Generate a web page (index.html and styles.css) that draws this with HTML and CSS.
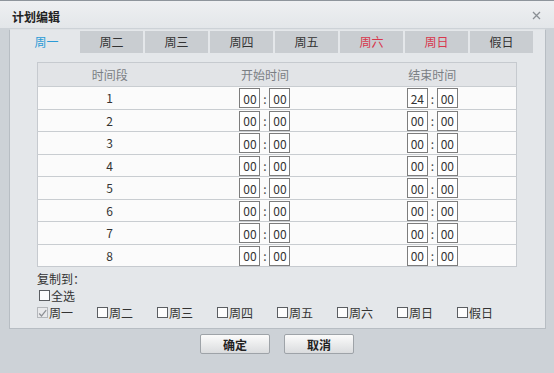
FILE: index.html
```html
<!DOCTYPE html>
<html lang="zh-CN">
<head>
  <meta charset="UTF-8" />
  <title>计划编辑</title>
<link rel="stylesheet" href="styles.css">
</head>
<body>

  <div class="dialog">
    <!-- 标题栏 -->
    <div class="titlebar">
      <span class="title">计划编辑</span>
      <svg class="close" width="9" height="9" viewBox="0 0 9 9">
        <path d="M1 1 L8 8 M8 1 L1 8" stroke="#8a8f94" stroke-width="1.3" fill="none" />
      </svg>
    </div>

    <div class="panel">
      <!-- 星期标签 -->
      <div class="tabs">
        <div class="tab active">周一</div>
        <div class="tab">周二</div>
        <div class="tab">周三</div>
        <div class="tab">周四</div>
        <div class="tab">周五</div>
        <div class="tab weekend">周六</div>
        <div class="tab weekend">周日</div>
        <div class="tab">假日</div>
      </div>

      <!-- 时间段表格 -->
      <table class="schedule">
        <thead>
          <tr><th class="col-seg">时间段</th><th class="col-time">开始时间</th><th class="col-time">结束时间</th></tr>
        </thead>
        <tbody id="rows"></tbody>
      </table>

      <!-- 复制到 -->
      <div class="copy">
        <div class="copy-label">复制到：</div>
        <div class="copy-line"><span class="box"></span>全选</div>
        <div class="days">
          <span class="day"><span class="box checked"><svg width="11" height="11" viewBox="0 0 11 11"><path d="M1.5 5.5 L4.3 8.5 L10 1.5" stroke="#8d9095" stroke-width="1.5" fill="none"/></svg></span>周一</span>
          <span class="day"><span class="box"></span>周二</span>
          <span class="day"><span class="box"></span>周三</span>
          <span class="day"><span class="box"></span>周四</span>
          <span class="day"><span class="box"></span>周五</span>
          <span class="day"><span class="box"></span>周六</span>
          <span class="day"><span class="box"></span>周日</span>
          <span class="day"><span class="box"></span>假日</span>
        </div>
      </div>
    </div>

    <div class="actions">
      <button>确定</button>
      <button>取消</button>
    </div>
  </div>

  <script>
    // 生成8个时间段
    const tbody = document.getElementById('rows');
    for (let i = 1; i <= 8; i++) {
      const end = i === 1 ? '24' : '00';
      const tr = document.createElement('tr');
      tr.innerHTML =
        `<td>${i}</td>` +
        `<td><span class="time"><input value="00"><i>:</i><input value="00"></span></td>` +
        `<td><span class="time"><input value="${end}"><i>:</i><input value="00"></span></td>`;
      tbody.appendChild(tr);
    }
  </script>

</body>
</html>
```

FILE: styles.css
```css
body {
  margin: 0;
  background-color: #cdd2d7;
  font-family: "Noto Sans CJK SC", sans-serif;
  font-size: 12px;
  color: #333;
}

.dialog {
  width: 554px;
  height: 373px;
  border-top: 1px solid #8e959c;
  box-sizing: border-box;
}

/* 标题栏 */
.titlebar {
  height: 27px;
  display: flex;
  align-items: center;
  justify-content: space-between;
  padding: 3px 13px 0 12px;
  box-sizing: border-box;
  background: linear-gradient(#eef0f2, #e3e6e9);
}

.title {
  font-weight: bold;
  color: #222;
  font-size: 12px;
}

.close {
  margin-top: -2px;
}

/* 面板 */
.panel {
  margin: 1px 8px 0 9px;
  height: 300px;
  box-sizing: border-box;
  border: 1px solid #b7bdc3;
  border-top-color: #dfe2e5;
  background-color: #e4e7ea;
}

.tabs {
  display: flex;
  gap: 2px;
  padding-left: 5px;
  margin-top: 1px;
}

.tab {
  width: 63px;
  height: 22px;
  line-height: 22px;
  text-align: center;
  background-color: #c9cdd1;
  color: #333;
}

.tab.active {
  background-color: #e4e7ea;
  color: #2b9bd6;
}

.tab.weekend {
  color: #d8364c;
}

/* 表格 */
.schedule {
  margin: 9px 0 0 27px;
  width: 480px;
  border-collapse: collapse;
  border: 1px solid #c6cacf;
}

.schedule th {
  height: 23px;
  font-weight: normal;
  color: #7b7f84;
  background-color: #e2e4e7;
  padding: 0;
}

.col-seg {
  width: 144px;
}

.col-time {
  width: 168px;
}

.schedule td {
  height: 21.5px;
  padding: 0;
  text-align: center;
  background-color: #fbfbfb;
  border-top: 1px solid #c9cdd1;
}

.time {
  display: inline-flex;
  align-items: center;
  vertical-align: middle;
}

.time input {
  width: 21px;
  height: 20px;
  box-sizing: border-box;
  border: 1px solid #7d7d7d;
  padding: 0;
  text-align: center;
  font-family: inherit;
  font-size: 12px;
  color: #333;
  background-color: #fff;
}

.time i {
  font-style: normal;
  width: 9px;
  text-align: center;
  color: #444;
}

/* 复制到 */
.copy {
  padding: 3px 0 0 27px;
}

.copy-label,
.copy-line,
.days {
  height: 17px;
  display: flex;
  align-items: center;
}

.copy-line {
  padding-left: 2px;
}

.day {
  width: 60px;
  display: flex;
  align-items: center;
}

.box {
  width: 11px;
  height: 11px;
  box-sizing: border-box;
  border: 1px solid #5a5d61;
  background-color: #fdfdfd;
  margin-right: 1px;
  display: inline-flex;
}

.box.checked {
  border-color: #b4b7bb;
  background-color: #e8e9eb;
}

/* 按钮 */
.actions {
  display: flex;
  justify-content: center;
  gap: 14px;
  margin-top: 5px;
}

button {
  width: 70px;
  height: 20px;
  padding: 0;
  border: 1px solid #9ea3a8;
  border-radius: 2px;
  background: linear-gradient(#fbfbfb, #dadcde);
  font-family: inherit;
  font-size: 12px;
  font-weight: bold;
  color: #222;
}
```
